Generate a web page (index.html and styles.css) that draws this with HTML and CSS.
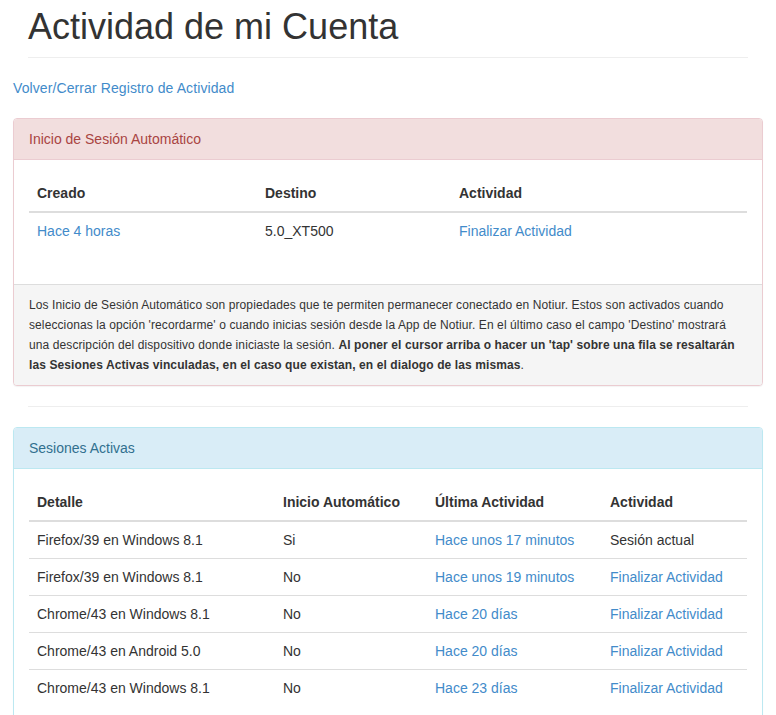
FILE: index.html
```html
<!DOCTYPE html>
<html lang="es">
<head>
<meta charset="utf-8">
<title>Actividad de mi Cuenta</title>
<link rel="stylesheet" href="styles.css">
</head>
<body>
<div class="wrap">
  <div class="page-header">
    <h1>Actividad de mi Cuenta</h1>
  </div>
  <p class="back"><a href="#">Volver/Cerrar Registro de Actividad</a></p>

  <div class="panel panel-danger">
    <div class="panel-heading">Inicio de Sesión Automático</div>
    <div class="panel-body">
      <table class="table">
        <thead>
          <tr>
            <th class="c1-1">Creado</th>
            <th class="c1-2">Destino</th>
            <th>Actividad</th>
          </tr>
        </thead>
        <tbody>
          <tr>
            <td><a href="#">Hace 4 horas</a></td>
            <td>5.0_XT500</td>
            <td><a href="#">Finalizar Actividad</a></td>
          </tr>
        </tbody>
      </table>
    </div>
    <div class="panel-footer">Los Inicio de Sesión Automático son propiedades que te permiten permanecer conectado en Notiur. Estos son activados cuando seleccionas la opción 'recordarme' o cuando inicias sesión desde la App de Notiur. En el último caso el campo 'Destino' mostrará una descripción del dispositivo donde iniciaste la sesión. <strong>Al poner el cursor arriba o hacer un 'tap' sobre una fila se resaltarán las Sesiones Activas vinculadas, en el caso que existan, en el dialogo de las mismas</strong>.</div>
  </div>

  <hr class="sep">

  <div class="panel panel-info">
    <div class="panel-heading">Sesiones Activas</div>
    <div class="panel-body">
      <table class="table">
        <thead>
          <tr>
            <th class="c2-1">Detalle</th>
            <th class="c2-2">Inicio Automático</th>
            <th class="c2-3">Última Actividad</th>
            <th>Actividad</th>
          </tr>
        </thead>
        <tbody>
          <tr>
            <td>Firefox/39 en Windows 8.1</td>
            <td>Si</td>
            <td><a href="#">Hace unos 17 minutos</a></td>
            <td>Sesión actual</td>
          </tr>
          <tr>
            <td>Firefox/39 en Windows 8.1</td>
            <td>No</td>
            <td><a href="#">Hace unos 19 minutos</a></td>
            <td><a href="#">Finalizar Actividad</a></td>
          </tr>
          <tr>
            <td>Chrome/43 en Windows 8.1</td>
            <td>No</td>
            <td><a href="#">Hace 20 días</a></td>
            <td><a href="#">Finalizar Actividad</a></td>
          </tr>
          <tr>
            <td>Chrome/43 en Android 5.0</td>
            <td>No</td>
            <td><a href="#">Hace 20 días</a></td>
            <td><a href="#">Finalizar Actividad</a></td>
          </tr>
          <tr>
            <td>Chrome/43 en Windows 8.1</td>
            <td>No</td>
            <td><a href="#">Hace 23 días</a></td>
            <td><a href="#">Finalizar Actividad</a></td>
          </tr>
        </tbody>
      </table>
    </div>
  </div>
</div>
</body>
</html>
```

FILE: styles.css
```css
* { box-sizing: border-box; }

html, body {
  margin: 0;
  padding: 0;
  background: #fff;
}

body {
  font-family: "Liberation Sans", Arial, Helvetica, sans-serif;
  font-size: 14px;
  line-height: 20px;
  color: #333;
}

a {
  color: #428bca;
  text-decoration: none;
}

.wrap {
  padding: 0 13px;
}

.page-header {
  margin: 0 15px 20px;
  padding-bottom: 10px;
  border-bottom: 1px solid #eee;
}

.page-header h1 {
  margin: 7px 0 0;
  font-size: 36px;
  font-weight: 400;
  line-height: 1.1;
  color: #333;
}

.back {
  margin: 0 0 20px;
  letter-spacing: 0.1px;
}

.panel {
  border: 1px solid transparent;
  border-radius: 4px;
  margin-bottom: 20px;
  background: #fff;
  box-shadow: 0 1px 1px rgba(0, 0, 0, 0.05);
}

.panel-heading {
  padding: 10px 15px;
  border-bottom: 1px solid transparent;
  border-radius: 3px 3px 0 0;
}

.panel-danger { border-color: #ebccd1; }
.panel-danger .panel-heading {
  background: #f2dede;
  color: #a94442;
  border-bottom-color: #ebccd1;
}

.panel-info { border-color: #bce8f1; }
.panel-info .panel-heading {
  background: #d9edf7;
  color: #31708f;
  border-bottom-color: #bce8f1;
}

.panel-body {
  padding: 15px;
}

.panel-footer {
  padding: 10px 15px;
  background: #f5f5f5;
  border-top: 1px solid #ddd;
  border-radius: 0 0 3px 3px;
  font-size: 12px;
  line-height: 20px;
  letter-spacing: 0.1px;
}

.table {
  width: 100%;
  border-collapse: collapse;
  border-spacing: 0;
  margin-bottom: 20px;
}

.table th,
.table td {
  padding: 8px;
  text-align: left;
  vertical-align: top;
  line-height: 20px;
}

.table th {
  font-weight: 700;
  border-bottom: 2px solid #ddd;
}

.table td {
  border-top: 1px solid #ddd;
}

.c1-1 { width: 228px; }
.c1-2 { width: 194px; }

.c2-1 { width: 246px; }
.c2-2 { width: 152px; }
.c2-3 { width: 175px; }

.sep {
  margin: 0 15px 20px;
  border: 0;
  border-top: 1px solid #eee;
  height: 0;
}
```
